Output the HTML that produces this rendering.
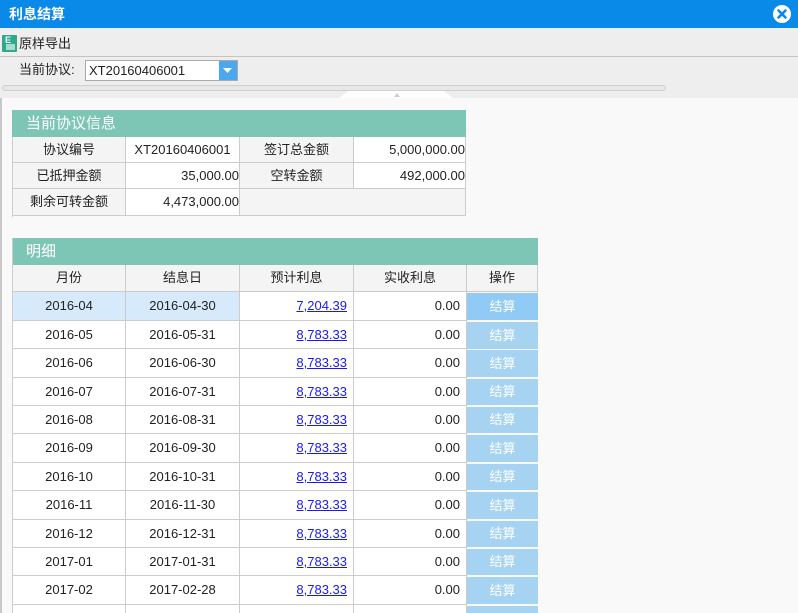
<!DOCTYPE html>
<html style="width:798px;height:613px;overflow:hidden"><head><meta charset="utf-8"><style>
*{margin:0;padding:0;box-sizing:border-box}
body{width:798px;height:613px;overflow:hidden;background:#f9f9f9;font-family:"Liberation Sans","Noto Sans CJK SC",sans-serif;font-size:13px;color:#222;position:relative}
.a{position:absolute}
.title{left:0;top:0;width:798px;height:28px;background:#0a8ae8;color:#fff;font-weight:bold;font-size:14px;line-height:28px;padding-left:9px}
.close{right:7px;top:5px;width:18px;height:18px;border-radius:50%;background:#fff}
.tb{left:0;top:28px;width:798px;height:29px;background:#eee;border-bottom:1px solid #c4c4c4}
.bar2{left:0;top:57px;width:798px;height:41px;background:#eee}
.cell{position:absolute;border-right:1px solid #ccc;border-bottom:1px solid #ccc;line-height:26px;white-space:nowrap;overflow:hidden}
.g{background:#f4f4f4;text-align:center}
.w{background:#fff;text-align:right}
.c{text-align:center}
.r{text-align:right;padding-right:6px}
.hd{background:#7dc6b5;color:#fff;font-size:15px;padding-left:14px}
a{color:#1a1aee;text-decoration:underline}
.btn{position:absolute;background:#a6d3f2;color:#fff;text-align:center}
</style></head><body>
<div class="a title">利息结算</div>
<div class="a close"><svg width="18" height="18" viewBox="0 0 18 18"><path d="M5.5 5.5L12.5 12.5M12.5 5.5L5.5 12.5" stroke="#0a8ae8" stroke-width="2.6" stroke-linecap="round"/></svg></div>
<div class="a tb"></div>
<div class="a" style="left:2px;top:35px;width:15px;height:17px;background:#2fa98c;border-radius:1px"><div class="a" style="left:3px;top:0px;color:#fff;font-size:9px;font-weight:bold">E</div><div class="a" style="left:4px;top:9px;width:9px;height:6px;background:#a8dccd"></div></div>
<div class="a" style="left:19px;top:35px;font-size:13px;line-height:18px">原样导出</div>
<div class="a bar2"></div>
<div class="a" style="left:19px;top:61px;line-height:18px">当前协议:</div>
<div class="a" style="left:85px;top:60px;width:153px;height:21px;border:1px solid #aaa;background:#fff;padding-left:3px;line-height:19px">XT20160406001</div>
<div class="a" style="left:219px;top:61px;width:18px;height:19px;background:#4ba8ee"><svg width="18" height="19"><path d="M4 7h9l-4.5 5z" fill="#fff"/></svg></div>
<div class="a" style="left:2px;top:85px;width:664px;height:6px;border:1px solid #d0d0d0;border-radius:3px;background:#e8e8e8"></div>
<svg class="a" style="left:338px;top:90px" width="118" height="9"><path d="M10 1H106L116 9H0Z" fill="#fff"/><path d="M56 7l3-4 3 4z" fill="#ccc"/></svg>
<div class="a" style="left:0;top:98px;width:798px;height:515px;background:#f9f9f9;border-left:2px solid #c8c8c8"></div>

<div class="a" style="left:12px;top:110px;width:454px;height:107px;border-left:1px solid #ccc">
<div class="a hd" style="left:-1px;top:0;width:454px;height:27px;line-height:27px">当前协议信息</div>
<div class="cell g" style="left:0;top:27px;width:113px;height:26px">协议编号</div>
<div class="cell w c" style="left:113px;top:27px;width:114px;height:26px">XT20160406001</div>
<div class="cell g" style="left:227px;top:27px;width:114px;height:26px">签订总金额</div>
<div class="cell w" style="left:341px;top:27px;width:112px;height:26px">5,000,000.00</div>
<div class="cell g" style="left:0;top:53px;width:113px;height:26px">已抵押金额</div>
<div class="cell w" style="left:113px;top:53px;width:114px;height:26px">35,000.00</div>
<div class="cell g" style="left:227px;top:53px;width:114px;height:26px">空转金额</div>
<div class="cell w" style="left:341px;top:53px;width:112px;height:26px">492,000.00</div>
<div class="cell g" style="left:0;top:79px;width:113px;height:27px">剩余可转金额</div>
<div class="cell w" style="left:113px;top:79px;width:114px;height:27px">4,473,000.00</div>
<div class="cell g" style="left:227px;top:79px;width:226px;height:27px"></div>
</div>

<div class="a" style="left:12px;top:238px;width:526px;height:375px;border-left:1px solid #ccc;overflow:hidden">
<div class="a hd" style="left:-1px;top:0;width:526px;height:27px;line-height:27px">明细</div>
<div class="cell g" style="left:0;top:27px;width:113px;height:27px">月份</div>
<div class="cell g" style="left:113px;top:27px;width:114px;height:27px">结息日</div>
<div class="cell g" style="left:227px;top:27px;width:114px;height:27px">预计利息</div>
<div class="cell g" style="left:341px;top:27px;width:113px;height:27px">实收利息</div>
<div class="cell g" style="left:454px;top:27px;width:71px;height:27px">操作</div>
<div class="a" style="left:0;top:54px;width:525px;height:330px">
<div class="cell c" style="left:0;top:0;width:113px;height:29px;line-height:28px;background:#d6eafc">2016-04</div><div class="cell c" style="left:113px;top:0;width:114px;height:29px;line-height:28px;background:#d6eafc">2016-04-30</div><div class="cell r" style="left:227px;top:0;width:114px;height:29px;line-height:28px;background:#fff"><a>7,204.39</a></div><div class="cell r" style="left:341px;top:0;width:113px;height:29px;line-height:28px;background:#fff">0.00</div><div class="btn" style="left:454px;top:1px;width:71px;height:27px;line-height:27px;background:#90caf5">结算</div>
<div class="cell c" style="left:0;top:29px;width:113px;height:28px;line-height:28px;background:#fff">2016-05</div><div class="cell c" style="left:113px;top:29px;width:114px;height:28px;line-height:28px;background:#fff">2016-05-31</div><div class="cell r" style="left:227px;top:29px;width:114px;height:28px;line-height:28px;background:#fff"><a>8,783.33</a></div><div class="cell r" style="left:341px;top:29px;width:113px;height:28px;line-height:28px;background:#fff">0.00</div><div class="btn" style="left:454px;top:30px;width:71px;height:27px;line-height:27px">结算</div>
<div class="cell c" style="left:0;top:57px;width:113px;height:29px;line-height:28px;background:#fff">2016-06</div><div class="cell c" style="left:113px;top:57px;width:114px;height:29px;line-height:28px;background:#fff">2016-06-30</div><div class="cell r" style="left:227px;top:57px;width:114px;height:29px;line-height:28px;background:#fff"><a>8,783.33</a></div><div class="cell r" style="left:341px;top:57px;width:113px;height:29px;line-height:28px;background:#fff">0.00</div><div class="btn" style="left:454px;top:58px;width:71px;height:27px;line-height:27px">结算</div>
<div class="cell c" style="left:0;top:86px;width:113px;height:28px;line-height:28px;background:#fff">2016-07</div><div class="cell c" style="left:113px;top:86px;width:114px;height:28px;line-height:28px;background:#fff">2016-07-31</div><div class="cell r" style="left:227px;top:86px;width:114px;height:28px;line-height:28px;background:#fff"><a>8,783.33</a></div><div class="cell r" style="left:341px;top:86px;width:113px;height:28px;line-height:28px;background:#fff">0.00</div><div class="btn" style="left:454px;top:87px;width:71px;height:26px;line-height:26px">结算</div>
<div class="cell c" style="left:0;top:114px;width:113px;height:28px;line-height:28px;background:#fff">2016-08</div><div class="cell c" style="left:113px;top:114px;width:114px;height:28px;line-height:28px;background:#fff">2016-08-31</div><div class="cell r" style="left:227px;top:114px;width:114px;height:28px;line-height:28px;background:#fff"><a>8,783.33</a></div><div class="cell r" style="left:341px;top:114px;width:113px;height:28px;line-height:28px;background:#fff">0.00</div><div class="btn" style="left:454px;top:115px;width:71px;height:26px;line-height:26px">结算</div>
<div class="cell c" style="left:0;top:142px;width:113px;height:29px;line-height:28px;background:#fff">2016-09</div><div class="cell c" style="left:113px;top:142px;width:114px;height:29px;line-height:28px;background:#fff">2016-09-30</div><div class="cell r" style="left:227px;top:142px;width:114px;height:29px;line-height:28px;background:#fff"><a>8,783.33</a></div><div class="cell r" style="left:341px;top:142px;width:113px;height:29px;line-height:28px;background:#fff">0.00</div><div class="btn" style="left:454px;top:143px;width:71px;height:27px;line-height:27px">结算</div>
<div class="cell c" style="left:0;top:171px;width:113px;height:28px;line-height:28px;background:#fff">2016-10</div><div class="cell c" style="left:113px;top:171px;width:114px;height:28px;line-height:28px;background:#fff">2016-10-31</div><div class="cell r" style="left:227px;top:171px;width:114px;height:28px;line-height:28px;background:#fff"><a>8,783.33</a></div><div class="cell r" style="left:341px;top:171px;width:113px;height:28px;line-height:28px;background:#fff">0.00</div><div class="btn" style="left:454px;top:172px;width:71px;height:26px;line-height:26px">结算</div>
<div class="cell c" style="left:0;top:199px;width:113px;height:29px;line-height:28px;background:#fff">2016-11</div><div class="cell c" style="left:113px;top:199px;width:114px;height:29px;line-height:28px;background:#fff">2016-11-30</div><div class="cell r" style="left:227px;top:199px;width:114px;height:29px;line-height:28px;background:#fff"><a>8,783.33</a></div><div class="cell r" style="left:341px;top:199px;width:113px;height:29px;line-height:28px;background:#fff">0.00</div><div class="btn" style="left:454px;top:200px;width:71px;height:27px;line-height:27px">结算</div>
<div class="cell c" style="left:0;top:228px;width:113px;height:28px;line-height:28px;background:#fff">2016-12</div><div class="cell c" style="left:113px;top:228px;width:114px;height:28px;line-height:28px;background:#fff">2016-12-31</div><div class="cell r" style="left:227px;top:228px;width:114px;height:28px;line-height:28px;background:#fff"><a>8,783.33</a></div><div class="cell r" style="left:341px;top:228px;width:113px;height:28px;line-height:28px;background:#fff">0.00</div><div class="btn" style="left:454px;top:229px;width:71px;height:26px;line-height:26px">结算</div>
<div class="cell c" style="left:0;top:256px;width:113px;height:28px;line-height:28px;background:#fff">2017-01</div><div class="cell c" style="left:113px;top:256px;width:114px;height:28px;line-height:28px;background:#fff">2017-01-31</div><div class="cell r" style="left:227px;top:256px;width:114px;height:28px;line-height:28px;background:#fff"><a>8,783.33</a></div><div class="cell r" style="left:341px;top:256px;width:113px;height:28px;line-height:28px;background:#fff">0.00</div><div class="btn" style="left:454px;top:257px;width:71px;height:26px;line-height:26px">结算</div>
<div class="cell c" style="left:0;top:284px;width:113px;height:29px;line-height:28px;background:#fff">2017-02</div><div class="cell c" style="left:113px;top:284px;width:114px;height:29px;line-height:28px;background:#fff">2017-02-28</div><div class="cell r" style="left:227px;top:284px;width:114px;height:29px;line-height:28px;background:#fff"><a>8,783.33</a></div><div class="cell r" style="left:341px;top:284px;width:113px;height:29px;line-height:28px;background:#fff">0.00</div><div class="btn" style="left:454px;top:285px;width:71px;height:27px;line-height:27px">结算</div>
<div class="cell c" style="left:0;top:313px;width:113px;height:28px;background:#fff"></div><div class="cell c" style="left:113px;top:313px;width:114px;height:28px;background:#fff"></div><div class="cell r" style="left:227px;top:313px;width:114px;height:28px;background:#fff"></div><div class="cell r" style="left:341px;top:313px;width:113px;height:28px;background:#fff"></div><div class="btn" style="left:454px;top:314px;width:71px;height:26px"></div>
</div>
<div class="a" style="left:525px;top:27px;width:1px;height:360px;background:#ccc"></div>
</div>
</body></html>
